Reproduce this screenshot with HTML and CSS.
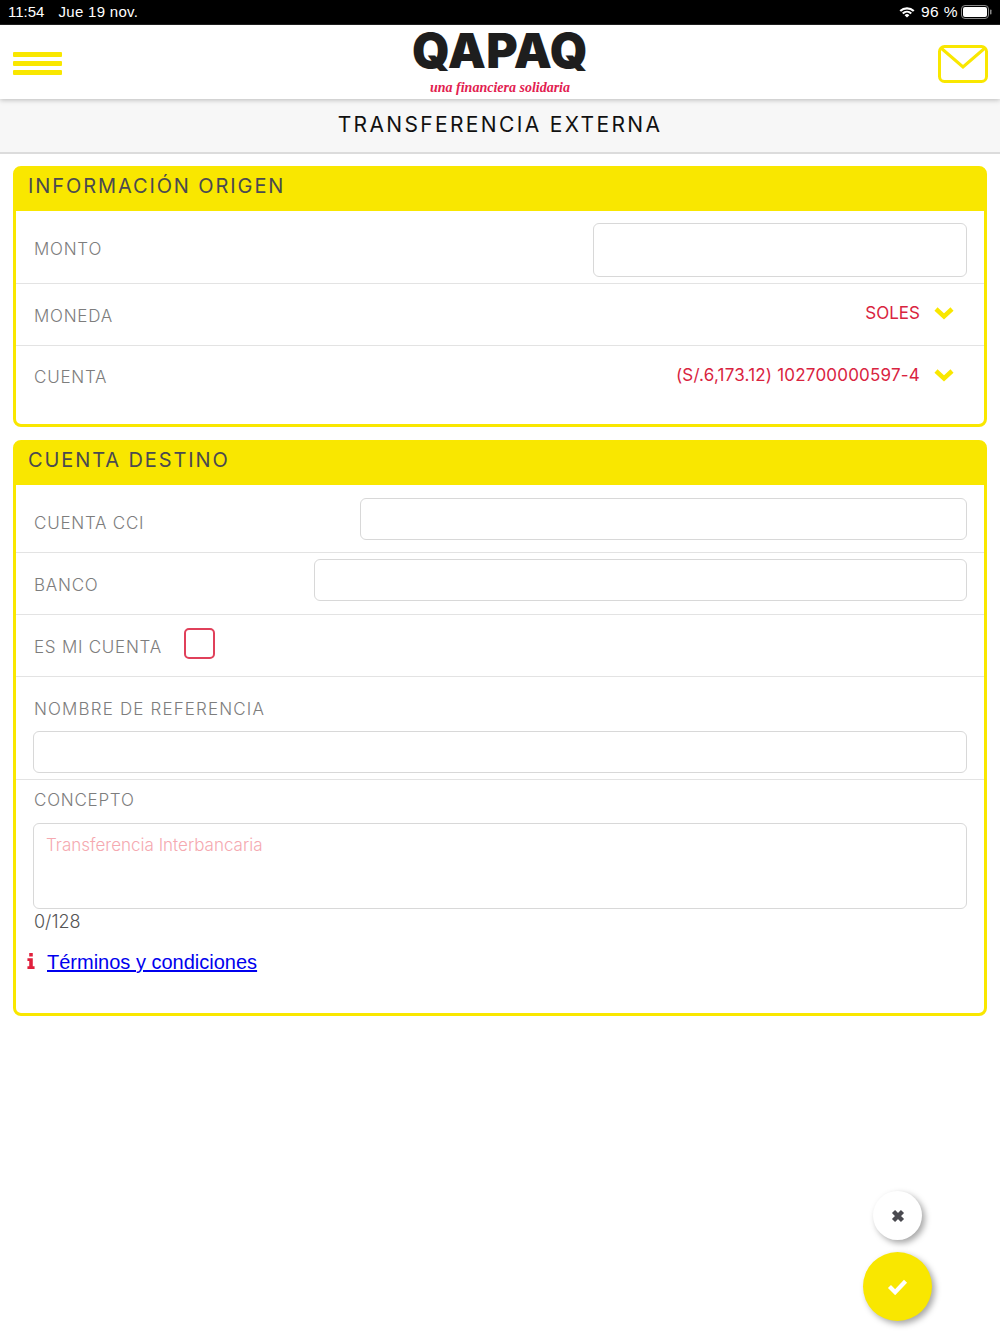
FILE: index.html
```html
<!DOCTYPE html>
<html lang="es">
<head>
<meta charset="utf-8">
<title>Transferencia externa</title>
<link rel="stylesheet" href="styles.css">
</head>
<body>
<div class="statusbar">
  <div class="status-left"><span>11:54</span><span class="date">Jue 19 nov.</span></div>
  <div class="status-right">
    <svg class="wifi" viewBox="0 0 16 12" width="16" height="12"><path d="M0.5 4.2 A11 11 0 0 1 15.5 4.2 L14 5.7 A9 9 0 0 0 2 5.7Z M3 6.7 A7.4 7.4 0 0 1 13 6.7 L11.5 8.2 A5.2 5.2 0 0 0 4.5 8.2Z M5.6 9.2 A3.5 3.5 0 0 1 10.4 9.2 L8 11.6Z" fill="#fff"/></svg>
    <span>96 %</span>
    <svg class="battery" viewBox="0 0 32 14" width="32" height="14"><rect x="0.5" y="0.5" width="27" height="13" rx="3.5" fill="none" stroke="#8a8a8a"/><rect x="2" y="2" width="24" height="10" rx="2" fill="#fff"/><rect x="29" y="4.5" width="1.5" height="5" rx="0.7" fill="#8a8a8a"/></svg>
  </div>
</div>
<header class="topbar">
  <div class="burger"><i></i><i></i><i></i></div>
  <div class="logo">
    <div class="logo-word">QAPAQ</div>
    <div class="logo-tag">una financiera solidaria</div>
  </div>
  <svg class="mail" viewBox="0 0 50 38" width="50" height="38"><rect x="1.5" y="1.5" width="47" height="35" rx="5" fill="none" stroke="#f9e700" stroke-width="3"/><path d="M3 3 L25 22 L47 3" fill="none" stroke="#f9e700" stroke-width="3"/></svg>
</header>
<div class="title">TRANSFERENCIA EXTERNA</div>
<main class="content">
  <section class="card">
    <h2 class="card-head">INFORMACIÓN ORIGEN</h2>
    <div class="row row-monto"><label>MONTO</label><div class="field field-monto"></div></div>
    <div class="row row-moneda"><label>MONEDA</label>
      <div class="select"><span>SOLES</span><svg viewBox="0 0 20 14" width="20" height="14"><path d="M2 3 L10 10.5 L18 3" fill="none" stroke="#f9e700" stroke-width="4.5"/></svg></div>
    </div>
    <div class="row row-cuenta"><label>CUENTA</label>
      <div class="select"><span>(S/.6,173.12) 102700000597-4</span><svg viewBox="0 0 20 14" width="20" height="14"><path d="M2 3 L10 10.5 L18 3" fill="none" stroke="#f9e700" stroke-width="4.5"/></svg></div>
    </div>
  </section>
  <section class="card">
    <h2 class="card-head">CUENTA DESTINO</h2>
    <div class="row row-cci"><label>CUENTA CCI</label><div class="field field-cci"></div></div>
    <div class="row row-banco"><label>BANCO</label><div class="field field-banco"></div></div>
    <div class="row row-mine"><label>ES MI CUENTA</label><div class="check"></div></div>
    <div class="stack stack-ref"><label>NOMBRE DE REFERENCIA</label><div class="field field-full"></div></div>
    <div class="stack stack-concept"><label>CONCEPTO</label>
      <div class="textarea">Transferencia Interbancaria</div>
      <div class="counter">0/128</div>
    </div>
    <div class="terms">
      <svg viewBox="0 0 8 18" width="8" height="16"><path d="M2 0h4v4H2z M0 6h6v9h2v3H0v-3h2V9H0z" fill="#e0203c"/></svg>
      <a href="#">Términos y condiciones</a>
    </div>
  </section>
</main>
<button class="fab fab-cancel" aria-label="Cancelar"><svg viewBox="0 0 14 14" width="14" height="14"><path d="M2.5 2.5 L11.5 11.5 M11.5 2.5 L2.5 11.5" stroke="#4a4a50" stroke-width="4.4"/></svg></button>
<button class="fab fab-ok" aria-label="Aceptar"><svg viewBox="0 0 22 18" width="21" height="17"><path d="M2.5 9 L8.5 15 L19.5 3.5" fill="none" stroke="#fff" stroke-width="4.5"/></svg></button>
</body>
</html>
```
FILE: styles.css
```css
* { box-sizing: border-box; }
html, body { margin: 0; padding: 0; }
body {
  width: 1000px; height: 1334px; overflow: hidden; position: relative;
  background: #fff; font-family: "Inter", "Liberation Sans", sans-serif;
}
.statusbar {
  height: 25px; background: #000; color: #fff; display: flex;
  justify-content: space-between; align-items: center;
  padding: 0 7px 1px 8px; font: 15px "Liberation Sans", sans-serif;
  border-bottom: 1px solid #222;
}
.status-left { display: flex; gap: 14px; }
.date { letter-spacing: 0.3px; }
.status-right { display: flex; align-items: center; gap: 6px; }
.status-right span { font-size: 15.5px; letter-spacing: 0.4px; }
.battery { margin-left: -3px; }
.topbar {
  height: 74px; background: #fff; position: relative; z-index: 1;
  display: flex; align-items: center; justify-content: space-between;
  padding: 0 12px 0 13px; box-shadow: 0 1px 5px rgba(0,0,0,.25);
}
.burger { display: flex; flex-direction: column; gap: 4px; width: 49px; margin-top: 3px; }
.burger i { display: block; height: 5px; background: #f9e700; border-radius: 1px; }
.logo {
  position: absolute; left: 400px; top: 0; width: 200px;
  text-align: center;
}
.logo-word {
  font: 900 48px/50px "Inter", "Liberation Sans", sans-serif;
  color: #1e1e1e; letter-spacing: 0.3px; padding-top: 1px;
}
.logo-tag {
  font: italic 700 14px/14px "Liberation Serif", serif;
  color: #e2204f; margin-top: 5px;
}
.mail { margin-top: 3px; }
.title {
  height: 55px; background: #f7f7f7; border-bottom: 2px solid #dcdcdc;
  text-align: center; font: 400 21px/51px "Inter", "Liberation Sans", sans-serif;
  letter-spacing: 2.35px; color: #111;
}
.content {
  padding: 12px 13px 0; display: flex; flex-direction: column; gap: 13px;
}
.card {
  border: 3px solid #f9e700; border-radius: 8px; background: #fff;
}
.card-head {
  margin: -1px 0 0; height: 43px; background: #f9e700; color: #4a4a50;
  font: 400 20px/36px "Inter", "Liberation Sans", sans-serif;
  letter-spacing: 1.9px; padding-left: 12px;
}
label {
  font-size: 17px; font-weight: 300; color: #7d7d7d; letter-spacing: 0.75px; display: block;
}
.row {
  display: flex; justify-content: space-between; align-items: center;
  padding-left: 18px; padding-right: 17px; border-bottom: 1px solid #e3e3e3;
}
.field, .textarea { border: 1px solid #d8d8d8; border-radius: 6px; background: #fff; }
.row-monto { height: 73px; }
.row-monto label { margin-top: 4px; }
.field-monto { width: 374px; height: 54px; align-self: flex-start; margin-top: 12px; }
.row-moneda { height: 62px; }
.row-moneda label { margin-top: 2px; }
.row-cuenta { height: 78px; border-bottom: 0; align-items: flex-start; padding-top: 21px; }
.select {
  display: flex; align-items: center; gap: 14px; padding-right: 13px;
  color: #d9243f; font-size: 17px; font-weight: 400; margin-top: -2px;
}
.row-cuenta .select span { letter-spacing: 0.2px; }
.row-moneda .select { margin-top: -3px; }
.row-cci { height: 68px; }
.row-cci label { margin-top: 8px; }
.field-cci { width: 607px; height: 42px; margin-top: 1px; }
.row-banco { height: 62px; }
.row-banco label { margin-top: 3px; }
.field-banco { width: 653px; height: 42px; margin-top: -7px; }
.row-mine { height: 62px; justify-content: flex-start; gap: 22px; }
.row-mine label { margin-top: 2px; }
.check { width: 31px; height: 31px; border: 2px solid #e0405a; border-radius: 5px; margin-top: -4px; }
.stack { padding: 0 17px 0 18px; }
.stack-ref { height: 103px; border-bottom: 1px solid #e3e3e3; padding-top: 22px; }
.stack-ref label { letter-spacing: 1.15px; }
.field-full { height: 42px; margin: 12px 0 0 -1px; }
.stack-concept { padding-top: 10px; }
.textarea {
  height: 86px; margin: 13px 0 0 -1px; padding: 11px 12px;
  font-size: 17px; font-weight: 300; color: #f5a9b0;
}
.counter { font-size: 18px; font-weight: 300; color: #555; margin-top: 2px; }
.terms {
  display: flex; gap: 12px; padding: 17px 0 0 11px; height: 81px; align-items: flex-start;
}
.terms svg { margin-top: 4px; }
.terms a { font: 20px/26px "Liberation Sans", sans-serif; color: #0000ee; }
.fab {
  position: absolute; border: 0; padding: 0; border-radius: 50%;
  display: flex; align-items: center; justify-content: center;
  box-shadow: 3px 3px 6px rgba(0,0,0,.35);
}
.fab-cancel { left: 873px; top: 1191px; width: 49px; height: 49px; background: #fff; }
.fab-ok { left: 863px; top: 1252px; width: 69px; height: 69px; background: #f9e700; }
```
